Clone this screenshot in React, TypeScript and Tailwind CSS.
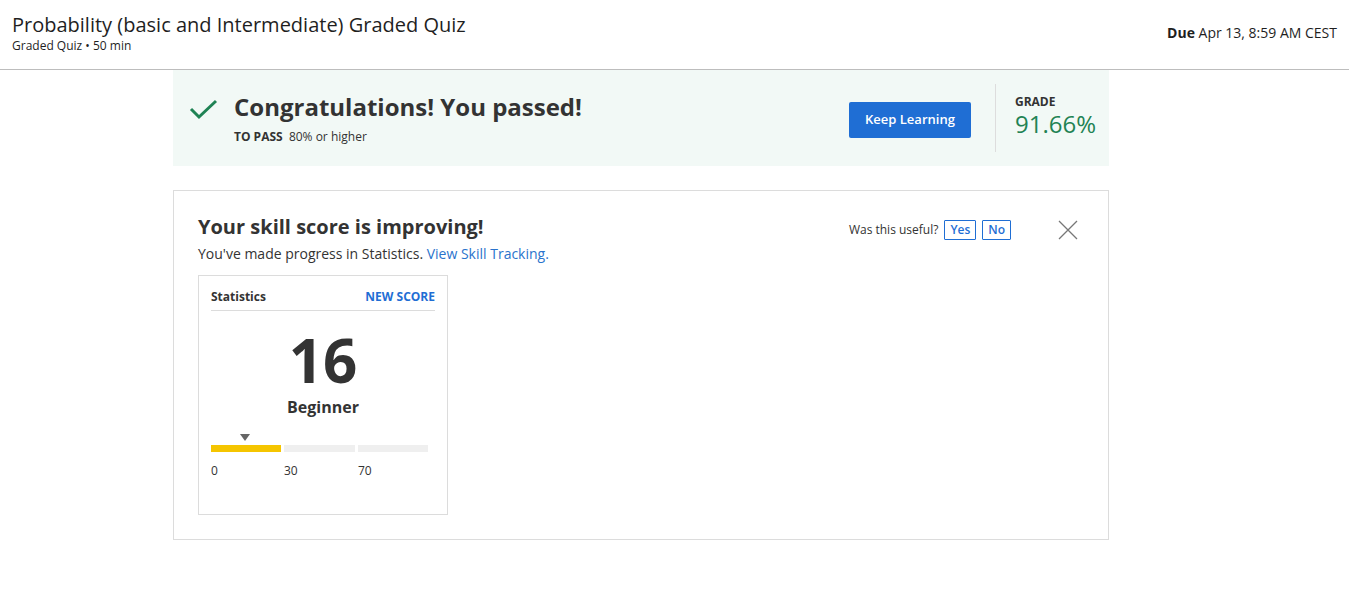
import React from "react";

export default function App() {
  return (
    <div className="min-h-[599px] bg-white text-[#1f1f1f]" style={{ fontFamily: '"Open Sans", "Noto Sans", sans-serif' }}>
      <header className="flex h-[70px] items-start justify-between border-b border-[#bdbdbd] px-3">
        <div className="pt-[12px]">
          <h1 className="text-[20px] leading-[26px] text-[#1f1f1f]">Probability (basic and Intermediate) Graded Quiz</h1>
          <div className="text-[12px] leading-[16px] text-[#1f1f1f]">Graded Quiz • 50 min</div>
        </div>
        <div className="pr-0 pt-[23px] text-[14px] leading-[20px] text-[#1f1f1f]">
          <span className="font-bold">Due</span> Apr 13, 8:59 AM CEST
        </div>
      </header>

      <div className="ml-[173px] w-[936px]">
        <div className="flex h-[96px] items-center bg-[#f2f9f6] pl-4 pr-3">
          <svg width="30" height="24" viewBox="0 0 30 24" className="mb-[16px] shrink-0">
            <path d="M2 11 L10 19 L27 3" fill="none" stroke="#1f8354" strokeWidth="3" />
          </svg>
          <div className="ml-[15px] flex-1">
            <div className="text-[24px] font-bold leading-[30px] text-[#333]">Congratulations! You passed!</div>
            <div className="mt-[7px] text-[12px] leading-[16px] text-[#333]">
              <span className="font-bold">TO PASS</span>&nbsp; 80% or higher
            </div>
          </div>
          <button className="mt-[4px] h-[36px] w-[122px] rounded-[2px] bg-[#1f6ed4] text-[13px] font-semibold text-white">Keep Learning</button>
          <div className="ml-[24px] h-[68px] w-px bg-[#ddd]" />
          <div className="ml-[19px] pb-[4px] pr-[1px]">
            <div className="text-[12px] font-bold leading-[16px] text-[#333]">GRADE</div>
            <div className="text-[24px] leading-[28px] text-[#1f8354]">91.66%</div>
          </div>
        </div>

        <div className="mt-[24px] h-[350px] border border-[#dcdcdc] px-[24px] pt-[22px]">
          <div className="flex items-start justify-between">
            <div>
              <div className="text-[20px] font-bold leading-[28px] text-[#333]">Your skill score is improving!</div>
              <div className="mt-[3px] text-[14px] leading-[20px] text-[#333]">
                You've made progress in Statistics. <span className="text-[#2a73cc]">View Skill Tracking.</span>
              </div>
            </div>
            <div className="flex items-center pt-[7px]">
              <span className="text-[12px] leading-[16px] text-[#333]">Was this useful?</span>
              <button className="ml-[6px] h-[20px] rounded-[1px] border border-[#1f6ed4] px-[5px] text-[12px] font-semibold leading-[18px] text-[#1f6ed4]">Yes</button>
              <button className="ml-[6px] h-[20px] rounded-[1px] border border-[#1f6ed4] px-[5px] text-[12px] font-semibold leading-[18px] text-[#1f6ed4]">No</button>
              <svg width="20" height="20" viewBox="0 0 20 20" className="ml-[47px] mr-[6px]">
                <path d="M1 1 L19 19 M19 1 L1 19" stroke="#777" strokeWidth="1.3" />
              </svg>
            </div>
          </div>

          <div className="mt-[11px] h-[240px] w-[250px] border border-[#dcdcdc] px-[12px] pt-[12px]">
            <div className="flex items-center justify-between border-b border-[#dcdcdc] pb-[4px]">
              <span className="text-[12px] font-bold leading-[18px] text-[#333]">Statistics</span>
              <span className="text-[12px] font-bold leading-[18px] text-[#1f6ed4]">NEW SCORE</span>
            </div>
            <div className="mt-[16px] text-center text-[60px] font-bold leading-[66px] text-[#333]">16</div>
            <div className="mt-[3px] text-center text-[16px] font-bold leading-[22px] text-[#333]">Beginner</div>
            <div className="relative mt-[16px]">
              <div className="ml-[29px] h-0 w-0 border-x-[5px] border-t-[7px] border-x-transparent border-t-[#666]" />
              <div className="mt-[4px] flex gap-[3px]">
                <div className="h-[7px] w-[70px] bg-[#f5c500]" />
                <div className="h-[7px] w-[71px] bg-[#efefef]" />
                <div className="h-[7px] w-[70px] bg-[#efefef]" />
              </div>
              <div className="mt-[11px] flex text-[12px] leading-[16px] text-[#333]">
                <span className="w-[73px]">0</span>
                <span className="w-[74px]">30</span>
                <span>70</span>
              </div>
            </div>
          </div>
        </div>
      </div>
    </div>
  );
}
